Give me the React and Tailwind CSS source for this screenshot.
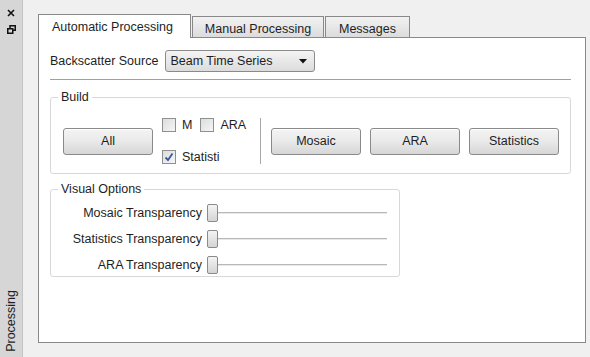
import React from 'react';

const font = { fontFamily: '"Liberation Sans", Arial, sans-serif' };

function Btn({ children }) {
  return (
    <button className="w-[90px] h-[27px] rounded-[3px] border border-[#8a8a8a] bg-gradient-to-b from-[#f4f4f4] via-[#e9e9e9] to-[#d6d6d6] text-[12.5px] text-[#1e1e1e] shadow-[inset_0_1px_0_#ffffff]">
      {children}
    </button>
  );
}

function Check({ label, checked }) {
  return (
    <label className="flex items-center gap-[6px] text-[12.5px] text-[#1e1e1e]">
      <span className="w-[14px] h-[14px] border border-[#8e8f8f] bg-gradient-to-br from-[#dcdcdc] to-[#f6f6f6] flex items-center justify-center">
        {checked && (
          <svg width="10" height="10" viewBox="0 0 10 10">
            <path d="M1.5 5.5 L4 8 L8.5 1.5" stroke="#3a5a9c" strokeWidth="1.8" fill="none" />
          </svg>
        )}
      </span>
      {label}
    </label>
  );
}

function Slider({ label }) {
  return (
    <div className="flex items-center h-[26px]">
      <span className="w-[156px] text-right pr-[5px] text-[12.5px] text-[#1e1e1e]">{label}</span>
      <div className="flex items-center w-[180px]">
        <span className="w-[11px] h-[18px] rounded-[2px] border border-[#8a8a8a] bg-gradient-to-b from-[#f4f4f4] to-[#d4d4d4]" />
        <span className="flex-1 h-[2px] bg-[#b8b8b8] border-b border-[#e8e8e8]" />
      </div>
    </div>
  );
}

export default function App() {
  return (
    <div className="w-[590px] h-[357px] bg-[#f0f0f0] flex overflow-hidden" style={font}>
      {/* dock title bar */}
      <div className="w-[23px] bg-[#d6d6d6] border-r border-[#c4c4c4] flex flex-col items-center pt-[9px] pb-[5px]">
        <svg width="8" height="8" viewBox="0 0 8 8">
          <path d="M1 1 L7 7 M7 1 L1 7" stroke="#111" strokeWidth="1.6" />
        </svg>
        <svg width="9" height="9" viewBox="0 0 9 9" className="mt-[8px]">
          <rect x="3" y="0.75" width="5.25" height="4.5" fill="none" stroke="#111" strokeWidth="1.5" />
          <rect x="0.75" y="3.75" width="5" height="4.5" fill="#d6d6d6" stroke="#111" strokeWidth="1.5" />
        </svg>
        <div className="flex-1" />
        <span className="[writing-mode:vertical-rl] rotate-180 text-[12.5px] text-[#1e1e1e]">Processing</span>
      </div>

      <div className="flex-1 flex flex-col pl-[15px] pt-[14px] pr-[4px] pb-[14px]">
        {/* tabs */}
        <div className="flex items-end h-[24px] -mb-px relative z-10">
          <div className="h-[24px] w-[153px] bg-white border border-b-0 border-[#898989] px-[13px] pt-[3px] text-[12.5px] text-[#1e1e1e]">
            Automatic Processing
          </div>
          <div className="h-[22px] w-[132px] ml-px bg-gradient-to-b from-[#f2f2f2] to-[#dcdcdc] border border-[#898989] text-center pt-[3px] text-[12.5px] text-[#1e1e1e]">
            Manual Processing
          </div>
          <div className="h-[22px] w-[85px] ml-[1px] bg-gradient-to-b from-[#f2f2f2] to-[#dcdcdc] border border-[#898989] text-center pt-[3px] text-[12.5px] text-[#1e1e1e]">
            Messages
          </div>
        </div>

        {/* pane */}
        <div className="flex-1 bg-white border border-[#898989] px-[11px] pt-[12px]">
          <div className="flex items-center gap-[7px] h-[22px]">
            <span className="text-[12.5px] text-[#1e1e1e]">Backscatter Source</span>
            <div className="w-[150px] h-[22px] rounded-[3px] border border-[#8a8a8a] bg-gradient-to-b from-[#f4f4f4] to-[#dcdcdc] flex items-center justify-between pl-[4px] pr-[7px] text-[12.5px] text-[#1e1e1e]">
              Beam Time Series
              <svg width="8" height="5" viewBox="0 0 8 5">
                <path d="M0 0 H8 L4 4.5 Z" fill="#111" />
              </svg>
            </div>
          </div>

          <div className="mt-[7px] mr-[3px] h-px bg-[#a0a0a0]" />

          <fieldset className="mt-[10px] mr-[3px] h-[84px] border border-[#d8d8d8] rounded-[3px]">
            <legend className="ml-[7px] px-[3px] text-[12.5px] text-[#1e1e1e] leading-[14px]">Build</legend>
            <div className="flex items-center pl-[12px] pt-[12px]">
              <Btn>All</Btn>
              <div className="ml-[9px] flex flex-col gap-[13px] w-[98px]">
                <div className="flex gap-[8px]">
                  <Check label="M" />
                  <Check label="ARA" />
                </div>
                <Check label="Statisti" checked />
              </div>
              <div className="w-px h-[46px] bg-[#a8a8a8]" />
              <div className="ml-[10px] flex gap-[9px]">
                <Btn>Mosaic</Btn>
                <Btn>ARA</Btn>
                <Btn>Statistics</Btn>
              </div>
            </div>
          </fieldset>

          <fieldset className="mt-[8px] w-[350px] h-[95px] border border-[#d8d8d8] rounded-[3px]">
            <legend className="ml-[7px] px-[3px] text-[12.5px] text-[#1e1e1e] leading-[14px]">Visual Options</legend>
            <div className="flex flex-col pt-[4px]">
              <Slider label="Mosaic Transparency" />
              <Slider label="Statistics Transparency" />
              <Slider label="ARA Transparency" />
            </div>
          </fieldset>
        </div>
      </div>
    </div>
  );
}
